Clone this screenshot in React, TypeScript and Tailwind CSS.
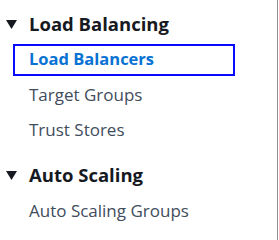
import React from 'react';

type Item = { label: string; active?: boolean };

const sections: { title: string; items: Item[] }[] = [
  {
    title: 'Load Balancing',
    items: [
      { label: 'Load Balancers', active: true },
      { label: 'Target Groups' },
      { label: 'Trust Stores' }
    ]
  },
  {
    title: 'Auto Scaling',
    items: [{ label: 'Auto Scaling Groups' }]
  }
];

function Caret() {
  return (
    <svg width="11" height="9" viewBox="0 0 11 9" className="shrink-0">
      <path d="M0 0 H11 L5.5 9 Z" fill="#16191f" />
    </svg>
  );
}

export default function App() {
  return (
    <div className="h-[240px] w-[279px] bg-white font-['Open_Sans',sans-serif]">
      <nav className="h-full w-[278px] border-r border-[#8f8f8f] pt-[10px]">
        {sections.map((section, i) =>
        <div key={section.title} className={i > 0 ? 'mt-[14px]' : ''}>
            <div className="flex h-[28px] items-center gap-[12px] pl-[6px]">
              <Caret />
              <span className="text-[18.5px] font-bold text-[#16191f]">
                {section.title}
              </span>
            </div>
            <ul className="mt-[4px]">
              {section.items.map((item) =>
            <li key={item.label} className="flex h-[35px] items-center">
                  {item.active ?
              <a className="ml-[13px] flex h-[32px] w-[222px] items-center border-2 border-[#0a0aff] pl-[14px] text-[16.5px] font-bold text-[#0972d3]">
                      {item.label}
                    </a> :

              <a className="pl-[29px] text-[17px] text-[#414d5c]">
                      {item.label}
                    </a>
              }
                </li>
            )}
            </ul>
          </div>
        )}
      </nav>
    </div>);

}
